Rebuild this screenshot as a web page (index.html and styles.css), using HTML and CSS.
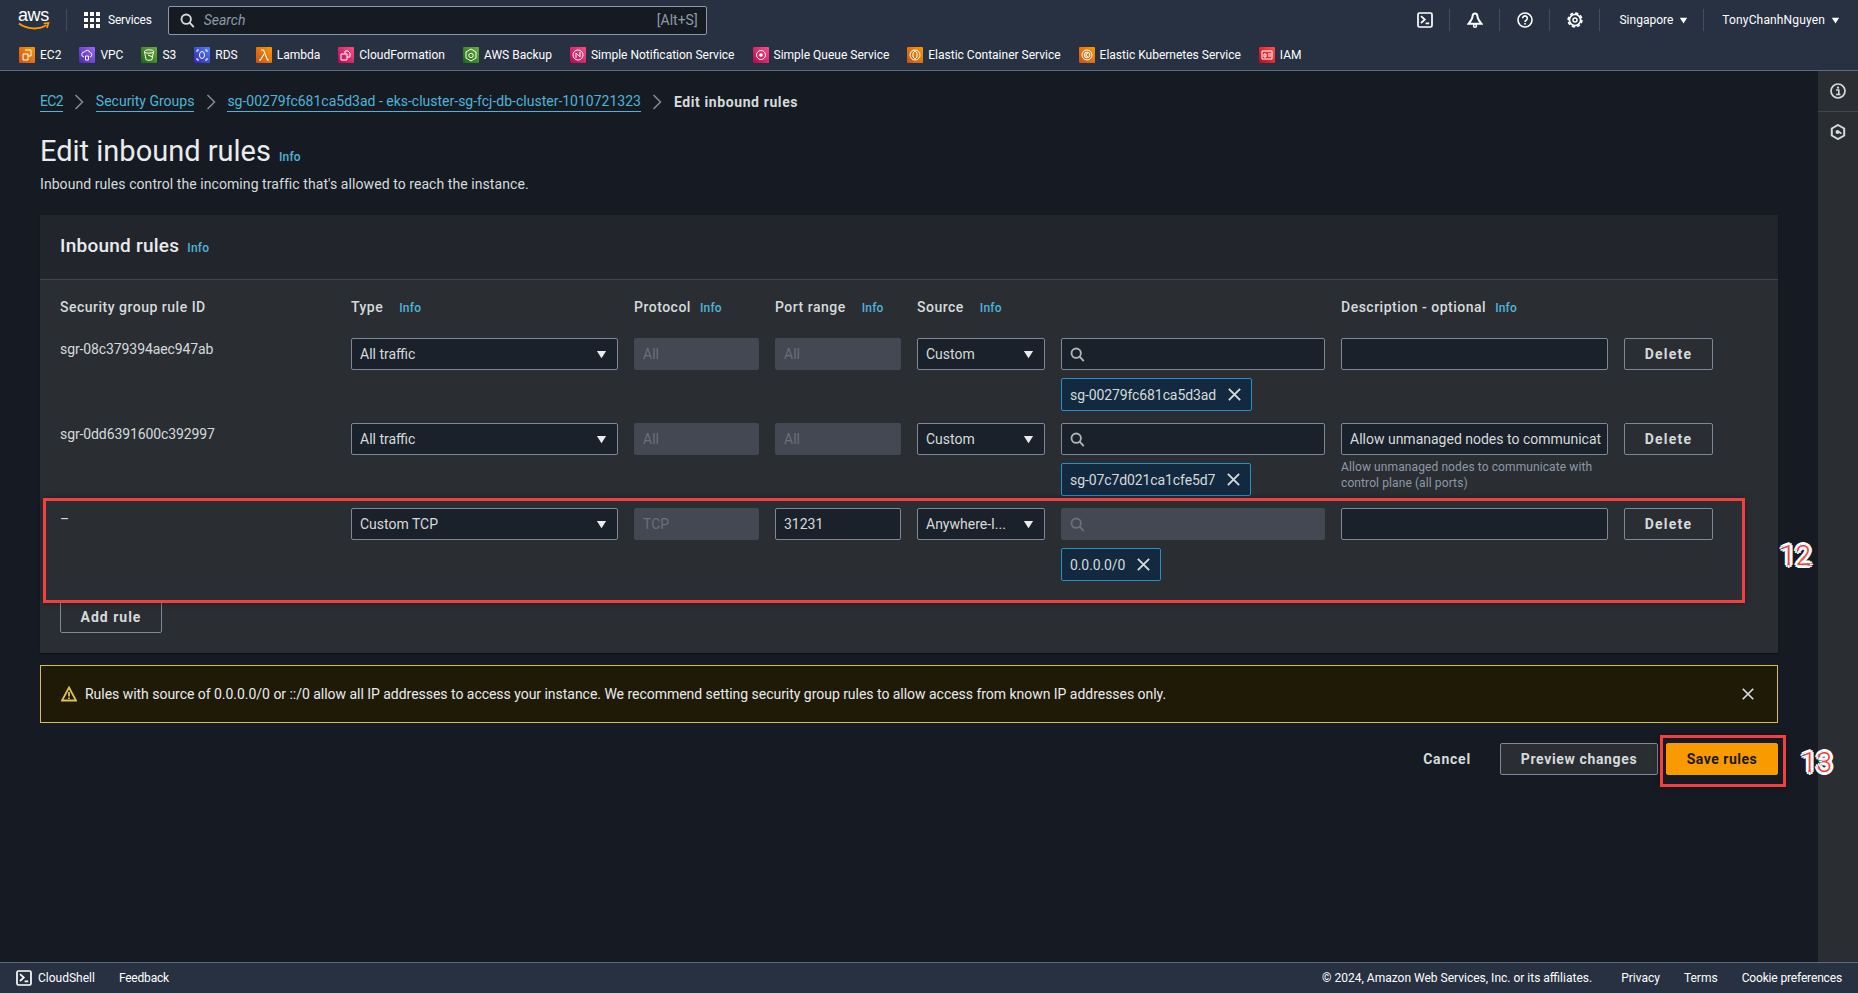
FILE: index.html
```html
<!DOCTYPE html>
<html lang="en">
<head>
<meta charset="utf-8">
<title>Edit inbound rules</title>
<link rel="stylesheet" href="styles.css">
</head>
<body>
<svg class="defs" width="0" height="0" aria-hidden="true">
  <symbol id="i-term" viewBox="0 0 16 16"><rect x="1" y="1" width="14" height="14" rx="1.5" fill="none" stroke="currentColor" stroke-width="1.7"/><path d="M4 4.2 7.800 7.600 4 11M8.600 11.400h3.600" fill="none" stroke="currentColor" stroke-width="1.7"/></symbol>
  <symbol id="i-caret" viewBox="0 0 10 8"><path d="M.8.8h8.400L5 7.400z" fill="currentColor"/></symbol>
  <symbol id="i-search" viewBox="0 0 16 16"><circle cx="6.600" cy="6.600" r="5" fill="none" stroke="currentColor" stroke-width="2"/><path d="m10.300 10.300 4.400 4.700" stroke="currentColor" stroke-width="2" fill="none"/></symbol>
  <symbol id="i-x" viewBox="0 0 16 16"><path d="m2 2 12 12M14 2 2 14" stroke="currentColor" stroke-width="2" fill="none"/></symbol>
  <symbol id="i-chev" viewBox="0 0 10 16"><path d="m1.500 1 7 7-7 7" stroke="currentColor" stroke-width="1.600" fill="none"/></symbol>
</svg>

<header class="topnav">
  <div class="nav-main">
    <div class="brand"><span class="aws-word">aws</span><svg class="aws-smile" viewBox="0 0 32 9"><path d="M1 1.500C9 7.500 21 8 28.500 3" stroke="#f90" stroke-width="2" fill="none"/><path d="m25.500 1.500 5 -.5-1.500 5" stroke="#f90" stroke-width="1.600" fill="none"/></svg></div>
    <div class="services">
      <svg class="grid-icon" viewBox="0 0 16 16"><g fill="#fff"><rect width="4" height="4"/><rect x="6" width="4" height="4"/><rect x="12" width="4" height="4"/><rect y="6" width="4" height="4"/><rect x="6" y="6" width="4" height="4"/><rect x="12" y="6" width="4" height="4"/><rect y="12" width="4" height="4"/><rect x="6" y="12" width="4" height="4"/><rect x="12" y="12" width="4" height="4"/></g></svg>
      <span>Services</span>
    </div>
    <div class="search">
      <svg class="ico15"><use href="#i-search"/></svg>
      <span class="search-ph">Search</span>
      <span class="search-key">[Alt+S]</span>
    </div>
    <div class="nav-right">
      <div class="nav-icon"><svg class="ico16"><use href="#i-term"/></svg></div>
      <div class="nav-icon"><svg class="ico16" viewBox="0 0 16 16"><path d="M8 1.600C6.400 1.600 5.600 3 5.500 4.600 5.300 7.200 3.300 9.400 1.400 11.800h13.200C12.700 9.400 10.700 7.200 10.500 4.600 10.400 3 9.600 1.600 8 1.600z" fill="none" stroke="currentColor" stroke-width="2"/><circle cx="8" cy="13.800" r="1.500" fill="none" stroke="currentColor" stroke-width="1.400"/></svg></div>
      <div class="nav-icon"><svg class="ico16" viewBox="0 0 16 16"><circle cx="8" cy="8" r="7" fill="none" stroke="currentColor" stroke-width="1.600"/><path d="M5.700 6.200a2.300 2.300 0 1 1 3.500 2C8.300 8.700 8 9.100 8 10" fill="none" stroke="currentColor" stroke-width="1.600"/><rect x="7.200" y="11" width="1.600" height="1.600" fill="currentColor"/></svg></div>
      <div class="nav-icon"><svg class="ico16" viewBox="0 0 16 16"><circle cx="8" cy="8" r="5.600" fill="none" stroke="currentColor" stroke-width="1.700"/><circle cx="8" cy="8" r="6.900" fill="none" stroke="currentColor" stroke-width="1.600" stroke-dasharray="3.200 2.220"/><circle cx="8" cy="8" r="2" fill="none" stroke="currentColor" stroke-width="1.500"/></svg></div>
      <div class="nav-menu nav-region"><span>Singapore</span><svg class="caret"><use href="#i-caret"/></svg></div>
      <div class="nav-menu nav-user"><span>TonyChanhNguyen</span><svg class="caret"><use href="#i-caret"/></svg></div>
    </div>
  </div>
  <nav class="favs">
    <a class="fav"><span class="fav-ico c-orange"><svg viewBox="0 0 16 16"><path d="M6 3h6v6H9M4 7h5v6H4z" fill="none" stroke="#fff" stroke-width="1"/></svg></span>EC2</a>
    <a class="fav"><span class="fav-ico c-purple"><svg viewBox="0 0 16 16"><path d="M5 10a2.500 2.500 0 0 1 .5-5 3 3 0 0 1 5.500 .5 2.300 2.300 0 0 1 0 4.500M6.500 9h3v4h-3z" fill="none" stroke="#fff" stroke-width="1"/></svg></span>VPC</a>
    <a class="fav"><span class="fav-ico c-green"><svg viewBox="0 0 16 16"><ellipse cx="8" cy="4.500" rx="4.500" ry="1.700" fill="none" stroke="#fff"/><path d="M3.500 4.500 5 12.500c1 1 5 1 6 0l1.500-8M7 8l5 2" fill="none" stroke="#fff"/></svg></span>S3</a>
    <a class="fav"><span class="fav-ico c-blue"><svg viewBox="0 0 16 16"><path d="M3 5V3h2M11 3h2v2M13 11v2h-2M5 13H3v-2" fill="none" stroke="#fff"/><ellipse cx="8" cy="8" rx="2.500" ry="3.500" fill="none" stroke="#fff"/></svg></span>RDS</a>
    <a class="fav"><span class="fav-ico c-orange"><svg viewBox="0 0 16 16"><path d="M5 3h2.500l4 10H13M8 7l-3.500 6H3" fill="none" stroke="#fff" stroke-width="1.100"/></svg></span>Lambda</a>
    <a class="fav"><span class="fav-ico c-pink"><svg viewBox="0 0 16 16"><path d="M3 7h6v6H3zM7 7V4h3l2 2v4H9" fill="none" stroke="#fff"/></svg></span>CloudFormation</a>
    <a class="fav"><span class="fav-ico c-green"><svg viewBox="0 0 16 16"><path d="M8 2l5 3v6l-5 3-5-3V5z" fill="none" stroke="#fff"/><circle cx="8" cy="8.500" r="2.200" fill="none" stroke="#fff"/></svg></span>AWS Backup</a>
    <a class="fav"><span class="fav-ico c-pink"><svg viewBox="0 0 16 16"><circle cx="8" cy="8" r="5" fill="none" stroke="#fff"/><path d="M6 11V6l4 4V5" fill="none" stroke="#fff"/></svg></span>Simple Notification Service</a>
    <a class="fav"><span class="fav-ico c-pink"><svg viewBox="0 0 16 16"><circle cx="8" cy="8" r="4.500" fill="none" stroke="#fff"/><circle cx="8" cy="8" r="1.800" fill="#fff"/></svg></span>Simple Queue Service</a>
    <a class="fav"><span class="fav-ico c-orange"><svg viewBox="0 0 16 16"><circle cx="8" cy="8" r="5" fill="none" stroke="#fff"/><path d="M6 6l2-2 2 2v4l-2 2-2-2z" fill="none" stroke="#fff"/></svg></span>Elastic Container Service</a>
    <a class="fav"><span class="fav-ico c-orange"><svg viewBox="0 0 16 16"><circle cx="8" cy="8" r="5" fill="none" stroke="#fff"/><circle cx="8" cy="8" r="2.800" fill="none" stroke="#fff"/><path d="M7 6v4M7 8l2-2M7 8l2 2" fill="none" stroke="#fff" stroke-width=".8"/></svg></span>Elastic Kubernetes Service</a>
    <a class="fav"><span class="fav-ico c-red"><svg viewBox="0 0 16 16"><path d="M3 4h10v8H3z" fill="none" stroke="#fff"/><path d="M5 7h2v3H5zM9 7h3M9 9h3" fill="none" stroke="#fff"/></svg></span>IAM</a>
  </nav>
</header>

<div class="shell">
  <main class="content">
    <div class="crumbs">
      <a class="crumb crumb-short">EC2</a><svg class="chev"><use href="#i-chev"/></svg>
      <a class="crumb">Security Groups</a><svg class="chev"><use href="#i-chev"/></svg>
      <a class="crumb">sg-00279fc681ca5d3ad - eks-cluster-sg-fcj-db-cluster-1010721323</a><svg class="chev"><use href="#i-chev"/></svg>
      <span class="crumb-now">Edit inbound rules</span>
    </div>
    <div class="page-head">
      <h1 class="page-title">Edit inbound rules</h1><a class="info">Info</a>
    </div>
    <p class="page-desc">Inbound rules control the incoming traffic that's allowed to reach the instance.</p>

    <section class="panel">
      <div class="panel-head"><h2 class="panel-title">Inbound rules</h2><a class="info">Info</a></div>
      <div class="panel-body">
        <div class="rule-grid rule-labels">
          <div class="lbl">Security group rule ID</div>
          <div class="lbl">Type<a class="info info-far">Info</a></div>
          <div class="lbl">Protocol<a class="info info-near">Info</a></div>
          <div class="lbl">Port range<a class="info info-far">Info</a></div>
          <div class="lbl lbl-wide">Source<a class="info info-far">Info</a></div>
          <div class="lbl">Description - optional<a class="info info-near">Info</a></div>
        </div>

        <div class="rule-grid rule-row">
          <div class="rule-id">sgr-08c379394aec947ab</div>
          <div class="ctl sel"><span>All traffic</span><svg class="caret-lg"><use href="#i-caret"/></svg></div>
          <div class="ctl off">All</div>
          <div class="ctl off">All</div>
          <div class="ctl sel"><span>Custom</span><svg class="caret-lg"><use href="#i-caret"/></svg></div>
          <div class="src">
            <div class="ctl find"><svg class="ico15"><use href="#i-search"/></svg></div>
            <div class="chip"><span>sg-00279fc681ca5d3ad</span><svg class="chip-x"><use href="#i-x"/></svg></div>
          </div>
          <div class="ctl"></div>
          <div class="btn btn-del">Delete</div>
        </div>

        <div class="rule-grid rule-row">
          <div class="rule-id">sgr-0dd6391600c392997</div>
          <div class="ctl sel"><span>All traffic</span><svg class="caret-lg"><use href="#i-caret"/></svg></div>
          <div class="ctl off">All</div>
          <div class="ctl off">All</div>
          <div class="ctl sel"><span>Custom</span><svg class="caret-lg"><use href="#i-caret"/></svg></div>
          <div class="src">
            <div class="ctl find"><svg class="ico15"><use href="#i-search"/></svg></div>
            <div class="chip"><span>sg-07c7d021ca1cfe5d7</span><svg class="chip-x"><use href="#i-x"/></svg></div>
          </div>
          <div class="desc-cell">
            <div class="ctl"><span>Allow unmanaged nodes to communicat</span></div>
            <div class="hint">Allow unmanaged nodes to communicate with control plane (all ports)</div>
          </div>
          <div class="btn btn-del">Delete</div>
        </div>

        <div class="rule-grid rule-row">
          <div class="rule-id">–</div>
          <div class="ctl sel"><span>Custom TCP</span><svg class="caret-lg"><use href="#i-caret"/></svg></div>
          <div class="ctl off">TCP</div>
          <div class="ctl">31231</div>
          <div class="ctl sel"><span>Anywhere-I...</span><svg class="caret-lg"><use href="#i-caret"/></svg></div>
          <div class="src">
            <div class="ctl find off"><svg class="ico15"><use href="#i-search"/></svg></div>
            <div class="chip"><span>0.0.0.0/0</span><svg class="chip-x"><use href="#i-x"/></svg></div>
          </div>
          <div class="ctl"></div>
          <div class="btn btn-del">Delete</div>
        </div>

        <div class="btn btn-add">Add rule</div>
      </div>
    </section>

    <div class="alert">
      <svg class="alert-ico" viewBox="0 0 16 16"><path d="M8 1.500 15 14.500H1z" fill="none" stroke="#dcc24e" stroke-width="1.800"/><path d="M8 6v4.500M8 11.500v1.500" stroke="#dcc24e" stroke-width="1.800"/></svg>
      <span class="alert-text">Rules with source of 0.0.0.0/0 or ::/0 allow all IP addresses to access your instance. We recommend setting security group rules to allow access from known IP addresses only.</span>
      <svg class="alert-x"><use href="#i-x"/></svg>
    </div>

    <div class="actions">
      <span class="btn-text">Cancel</span>
      <div class="btn btn-preview">Preview changes</div>
      <div class="btn btn-save">Save rules</div>
    </div>
  </main>
  <aside class="side">
    <div class="side-item"><svg class="ico16" viewBox="0 0 16 16"><circle cx="8" cy="8" r="7" fill="none" stroke="currentColor" stroke-width="1.700"/><rect x="7" y="3.600" width="2" height="2" fill="currentColor"/><path d="M6 7h2.800v4M6 11.500h4.400" fill="none" stroke="currentColor" stroke-width="1.600"/></svg></div>
    <div class="side-item"><svg class="ico16" viewBox="0 0 16 16"><path d="M8 1 14.200 4.500v7L8 15l-6.200-3.500v-7z" fill="none" stroke="currentColor" stroke-width="2"/><circle cx="7.500" cy="8" r="2" fill="currentColor"/><path d="M8 7.500l3.500 2" stroke="currentColor" stroke-width="1.600"/></svg></div>
  </aside>
</div>

<footer class="foot">
  <div class="foot-left">
    <span class="foot-shell"><svg class="ico16"><use href="#i-term"/></svg>CloudShell</span>
    <span class="foot-feedback">Feedback</span>
  </div>
  <div class="foot-right">
    <span class="foot-copy">© 2024, Amazon Web Services, Inc. or its affiliates.</span>
    <span>Privacy</span>
    <span>Terms</span>
    <span class="foot-cookie">Cookie preferences</span>
  </div>
</footer>

<div class="mark mark-rule"></div>
<div class="mark mark-save"></div>
<span class="step step-12">12</span>
<span class="step step-13">13</span>
</body>
</html>
```
FILE: styles.css
```css
* { box-sizing: border-box; }
html, body { margin: 0; padding: 0; }
body {
  position: relative;
  width: 1858px;
  height: 993px;
  overflow: hidden;
  display: flex;
  flex-direction: column;
  background: #161b23;
  color: #d5dbdb;
  font-family: Roboto, "Liberation Sans", sans-serif;
  font-size: 14px;
  line-height: 20px;
}
.defs { position: absolute; }
h1, h2, p { margin: 0; }

.ico15 { width: 15px; height: 15px; flex: none; }
.ico16 { width: 16px; height: 16px; flex: none; }

/* top navigation */
.topnav { height: 71px; flex: none; background: #273142; border-bottom: 1px solid #5f6b7a; color: #fff; }
.nav-main { height: 40px; display: flex; align-items: center; }
.brand { width: 48px; height: 22px; margin-left: 18px; display: flex; flex-direction: column; }
.aws-word { font-family: "Liberation Sans", sans-serif; font-size: 18px; line-height: 13px; letter-spacing: -.4px; color: #fff; }
.aws-smile { width: 32px; height: 9px; }
.services { height: 22px; padding-left: 17px; border-left: 1px solid #414d5c; display: flex; align-items: center; gap: 8px; font-size: 12px; letter-spacing: -.2px; }
.grid-icon { width: 16px; height: 16px; }
.search { width: 539px; height: 29px; margin-left: 16px; background: #161b23; border: 1px solid #8d99a8; border-radius: 2px; display: flex; align-items: center; padding: 0 8px 0 11px; color: #d5dbdb; }
.search-ph { margin-left: 9px; flex: 1; font-style: italic; font-size: 14px; color: #8d99a8; }
.search-key { font-size: 14px; color: #8d99a8; }
.nav-right { margin-left: auto; display: flex; align-items: center; padding-right: 18px; }
.nav-icon { width: 50px; height: 22px; display: flex; align-items: center; justify-content: center; border-right: 1px solid #414d5c; }
.nav-menu { display: flex; align-items: center; font-size: 12px; height: 22px; gap: 6px; }
.nav-region { padding-left: 19px; padding-right: 15px; border-right: 1px solid #414d5c; }
.nav-user { padding-left: 18px; letter-spacing: .15px; }
.caret { width: 9px; height: 7px; color: #fff; }
.favs { height: 30px; display: flex; align-items: center; padding-left: 19px; gap: 18px; }
.fav { display: flex; align-items: center; gap: 5px; font-size: 12px; color: #fff; white-space: nowrap; }
.fav-ico { width: 16px; height: 16px; border-radius: 1px; flex: none; display: block; }
.fav-ico svg { display: block; width: 16px; height: 16px; }
.c-orange { background: linear-gradient(45deg, #c8511b, #f90); }
.c-purple { background: linear-gradient(45deg, #4d27a8, #a166ff); }
.c-green { background: linear-gradient(45deg, #1b660f, #6cae3e); }
.c-blue { background: linear-gradient(45deg, #2e27ad, #527fff); }
.c-pink { background: linear-gradient(45deg, #b0084d, #ff4f8b); }
.c-red { background: linear-gradient(45deg, #bd0816, #ff5252); }

/* shell */
.shell { flex: 1; min-height: 0; display: flex; }
.content { flex: 1; min-width: 0; padding: 21px 40px 0; }
.side { width: 40px; flex: none; background: #2a2e33; }
.side-item { height: 41px; padding-bottom: 1px; display: flex; align-items: center; justify-content: center; border-bottom: 1px solid #414750; color: #d5dbdb; }
.side-item:last-child { border-bottom: 0; }

/* heading */
.crumbs { height: 20px; display: flex; align-items: center; font-size: 14px; }
.crumb { color: #4eb5d8; border-bottom: 1px solid #4eb5d8; line-height: 19px; height: 20px; }
.crumb-short { letter-spacing: -.7px; }
.chev { width: 10px; height: 16px; margin: 0 11.500px; color: #7d8998; flex: none; }
.crumb-now { font-weight: 700; letter-spacing: .6px; color: #d5dbdb; }
.page-head { margin-top: 21px; height: 36px; display: flex; align-items: baseline; gap: 8px; }
.page-title { font-size: 29px; line-height: 36px; font-weight: 400; color: #e9ebed; }
.info { font-size: 12px; font-weight: 500; letter-spacing: .2px; color: #4eb5d8; }
.page-desc { margin-top: 5px; height: 20px; letter-spacing: .07px; color: #d5dbdb; }

/* panel */
.panel { margin-top: 21px; background: #2a2e33; box-shadow: 0 1px 1px #0d1015; }
.panel-head { height: 65px; padding-left: 20px; padding-top: 19px; background: #22262c; border-bottom: 1px solid #414750; display: flex; align-items: baseline; gap: 8px; }
.panel-title { font-size: 19px; line-height: 24px; font-weight: 500; letter-spacing: .25px; color: #e9ebed; }
.panel-body { padding: 17px 20px 20px; }
.rule-grid {
  display: grid;
  grid-template-columns: 275px 267px 125px 126px 128px 264px 267px 89px;
  column-gap: 16px;
  align-items: start;
}
.rule-labels { height: 41px; }
.lbl { font-weight: 500; letter-spacing: .5px; color: #d5dbdb; line-height: 21px; white-space: nowrap; }
.lbl-wide { grid-column: span 2; }
.info-far { margin-left: 16px; }
.info-near { margin-left: 9px; }
.rule-row { height: 85px; }
.rule-id { line-height: 22px; letter-spacing: -.1px; color: #d5dbdb; }

.ctl { height: 32px; background: #1b212a; border: 1px solid #7d8998; border-radius: 2px; padding: 0 8px; line-height: 30px; color: #d5dbdb; display: flex; align-items: center; white-space: nowrap; overflow: hidden; }
.sel { justify-content: space-between; }
.caret-lg { width: 11px; height: 9px; margin-right: 2px; color: #e9ebed; flex: none; }
.off { background: #434853; border-color: #434853; color: #687078; }
.find { color: #aab7b8; }
.find.off { color: #687078; }
.src, .desc-cell { display: flex; flex-direction: column; align-items: stretch; }
.chip { align-self: flex-start; height: 33px; margin-top: 8px; padding: 0 9px 0 8px; background: #12293f; border: 1px solid #2a8fc6; border-radius: 2px; display: flex; align-items: center; gap: 11px; letter-spacing: -.1px; color: #d5dbdb; white-space: nowrap; }
.chip-x { width: 15px; height: 15px; color: #d5dbdb; }
.hint { margin-top: 4px; font-size: 12px; line-height: 16px; letter-spacing: .1px; color: #8d99a8; }

/* buttons */
.btn { display: flex; align-items: center; justify-content: center; height: 32px; border: 1px solid #7d8998; border-radius: 2px; font-weight: 700; letter-spacing: .5px; color: #d5dbdb; white-space: nowrap; }
.btn-del { letter-spacing: 1.200px; }
.btn-add { width: 102px; margin-top: 8px; letter-spacing: 1px; }
.alert { margin-top: 12px; height: 58px; background: #1f1a06; border: 1px solid #d9bf4a; display: flex; align-items: center; padding: 0 22px 0 20px; color: #e9ebed; }
.alert-ico { width: 16px; height: 16px; flex: none; }
.alert-text { margin-left: 8px; flex: 1; white-space: nowrap; letter-spacing: -.03px; }
.alert-x { width: 14px; height: 14px; color: #d5dbdb; flex: none; }
.actions { margin-top: 20px; display: flex; justify-content: flex-end; align-items: center; }
.btn-text { font-weight: 700; letter-spacing: .8px; color: #d5dbdb; margin-right: 29px; }
.btn-preview { width: 158px; margin-right: 8px; background: #2a2e33; letter-spacing: .65px; }
.btn-save { width: 112px; background: #f89a00; border-color: #f89a00; color: #16191f; }

/* footer */
.foot { height: 31px; flex: none; background: #273142; border-top: 1px solid #5f6b7a; display: flex; align-items: center; justify-content: space-between; padding: 0 16px; font-size: 12px; color: #fff; }
.foot-left { display: flex; align-items: center; gap: 24px; }
.foot-shell { display: flex; align-items: center; gap: 6px; }
.foot-feedback { letter-spacing: -.2px; }
.foot-right { display: flex; align-items: center; gap: 24px; }
.foot-copy { margin-right: 5px; }
.foot-cookie { letter-spacing: -.15px; }

/* annotations drawn over the screenshot */
.mark { position: absolute; border: 3px solid #f33f3f; box-shadow: 0 0 6px rgba(0,0,0,.35); }
.mark-rule { left: 43px; top: 498px; width: 1702px; height: 105px; }
.mark-save { left: 1660px; top: 735px; width: 126px; height: 52px; }
.step {
  position: absolute;
  font-family: Roboto, "Liberation Sans", sans-serif;
  font-weight: 300;
  font-size: 28px;
  line-height: 30px;
  color: #f33f3f;
  text-shadow: 3px 0 0 #fff, -3px 0 0 #fff, 0 3px 0 #fff, 0 -3px 0 #fff, 2px 2px 0 #fff, -2px 2px 0 #fff, 2px -2px 0 #fff, -2px -2px 0 #fff;
}
.step-12 { left: 1780px; top: 541px; }
.step-13 { left: 1801px; top: 748px; }
```
